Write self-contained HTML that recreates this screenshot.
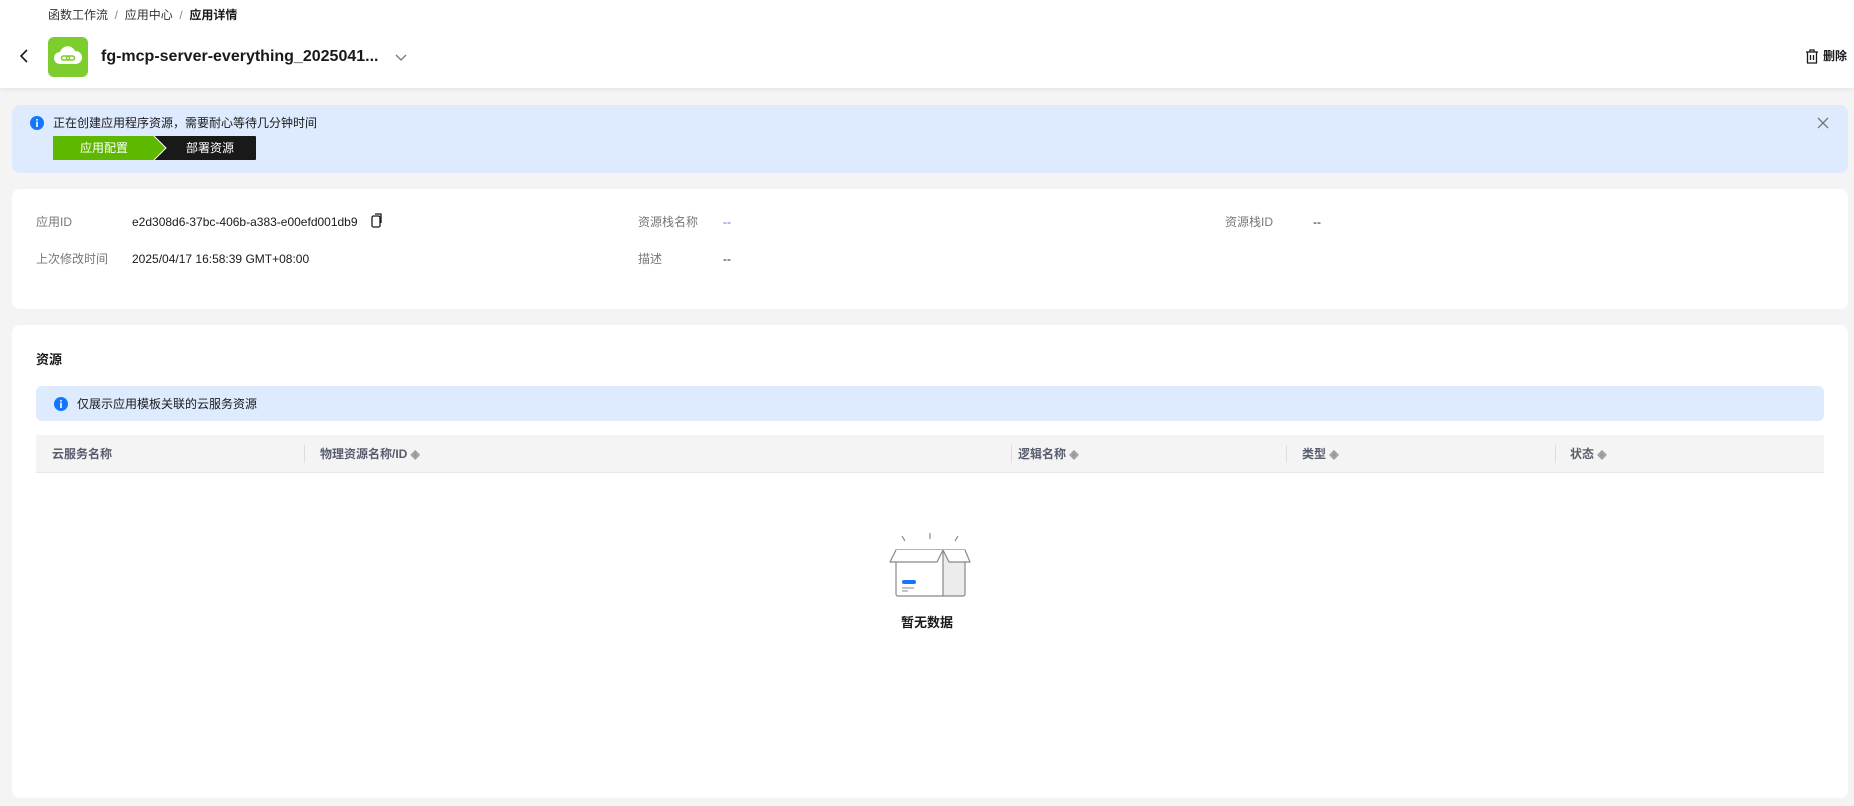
<!DOCTYPE html><html><head><meta charset="utf-8"><style>
*{box-sizing:border-box;margin:0;padding:0}
body{width:1854px;height:806px;background:#f4f4f4;font-family:"Liberation Sans","Noto Sans CJK SC",sans-serif;color:#191919;font-size:12px;line-height:16px;position:relative;overflow:hidden}
.a{position:absolute;white-space:nowrap}
.lbl{color:#777;font-size:12px}
.th{color:#575d6c;font-size:12px;font-weight:bold}
.dv{position:absolute;width:1px;height:18px;background:#ddd;top:445px}
</style></head><body>
<div class="a" style="left:0;top:0;width:1854px;height:88px;background:#fff;box-shadow:0 2px 4px rgba(0,0,0,.06)"></div>
<div class="a" style="left:48px;top:7px;font-size:12px;color:#333">函数工作流 <span style="color:#888">&nbsp;/&nbsp;</span> 应用中心 <span style="color:#888">&nbsp;/&nbsp;</span> <b style="color:#191919">应用详情</b></div>
<svg class="a" style="left:18px;top:48px" width="12" height="16" viewBox="0 0 12 16"><path d="M9 2L3 8l6 6" stroke="#191919" stroke-width="1.6" fill="none"/></svg>
<div class="a" style="left:48px;top:37px;width:40px;height:40px;border-radius:6px;background:#7ccd2d"></div>
<svg class="a" style="left:48px;top:37px" width="40" height="40" viewBox="0 0 40 40"><path d="M12 27a6 6 0 0 1 0-12 8 8 0 0 1 15 -1 6.5 6.5 0 0 1 1 13z" fill="#fff"/><rect x="13.5" y="19" width="8" height="4" rx="2" stroke="#7ccd2d" stroke-width="1.5" fill="none"/><rect x="18.5" y="19" width="8" height="4" rx="2" stroke="#7ccd2d" stroke-width="1.5" fill="none"/></svg>
<div class="a" style="left:101px;top:47px;font-size:16px;line-height:20px;font-weight:bold">fg-mcp-server-everything_2025041...</div>
<svg class="a" style="left:395px;top:54px" width="12" height="8" viewBox="0 0 12 8"><path d="M1 1l5 5 5-5" stroke="#777" stroke-width="1.3" fill="none"/></svg>
<svg class="a" style="left:1805px;top:49px" width="14" height="15" viewBox="0 0 14 15"><path d="M1 3h12M5 3V1h4v2M2.5 3v11h9V3M5.5 6v5M8.5 6v5" stroke="#191919" stroke-width="1.3" fill="none"/></svg>
<div class="a" style="left:1823px;top:48px;font-weight:bold">删除</div>

<div class="a" style="left:12px;top:105px;width:1836px;height:68px;background:#deebff;border-radius:8px"></div>
<svg class="a" style="left:30px;top:116px" width="14" height="14" viewBox="0 0 14 14"><circle cx="7" cy="7" r="7" fill="#1476ff"/><rect x="6.2" y="3" width="1.6" height="1.6" fill="#fff"/><rect x="6.2" y="5.6" width="1.6" height="5.4" fill="#fff"/></svg>
<div class="a" style="left:53px;top:115px;font-size:12px">正在创建应用程序资源，需要耐心等待几分钟时间</div>
<svg class="a" style="left:53px;top:136px" width="203" height="24" viewBox="0 0 203 24"><rect x="0" y="0" width="203" height="24" fill="#191919" rx="1"/><path d="M0 0h101l12 12-12 12H0z" fill="#5eb800"/><path d="M101 0l12 12-12 12" stroke="#fff" stroke-width="1" fill="none"/></svg>
<div class="a" style="left:53px;top:140px;width:102px;text-align:center;color:#fff;font-size:12px">应用配置</div>
<div class="a" style="left:165px;top:140px;width:90px;text-align:center;color:#fff;font-size:12px">部署资源</div>
<svg class="a" style="left:1817px;top:117px" width="12" height="12" viewBox="0 0 12 12"><path d="M1 1l10 10M11 1L1 11" stroke="#777" stroke-width="1.3"/></svg>

<div class="a" style="left:12px;top:189px;width:1836px;height:120px;background:#fff;border-radius:8px"></div>
<div class="a lbl" style="left:36px;top:214px">应用ID</div>
<div class="a" style="left:132px;top:214px">e2d308d6-37bc-406b-a383-e00efd001db9</div>
<svg class="a" style="left:371px;top:213px" width="14" height="15" viewBox="0 0 14 15"><rect x="1" y="3" width="8" height="11" rx="1.5" stroke="#191919" stroke-width="1.3" fill="none"/><path d="M4 1h6v9" stroke="#191919" stroke-width="1.3" fill="none"/></svg>
<div class="a lbl" style="left:638px;top:214px">资源栈名称</div>
<div class="a" style="left:723px;top:214px;color:#526ecc">--</div>
<div class="a lbl" style="left:1225px;top:214px">资源栈ID</div>
<div class="a" style="left:1313px;top:214px">--</div>
<div class="a lbl" style="left:36px;top:251px">上次修改时间</div>
<div class="a" style="left:132px;top:251px">2025/04/17 16:58:39 GMT+08:00</div>
<div class="a lbl" style="left:638px;top:251px">描述</div>
<div class="a" style="left:723px;top:251px">--</div>

<div class="a" style="left:12px;top:325px;width:1836px;height:473px;background:#fff;border-radius:8px"></div>
<div class="a" style="left:36px;top:352px;font-size:13px;font-weight:bold">资源</div>
<div class="a" style="left:36px;top:386px;width:1788px;height:35px;background:#deebff;border-radius:6px"></div>
<svg class="a" style="left:54px;top:397px" width="14" height="14" viewBox="0 0 14 14"><circle cx="7" cy="7" r="7" fill="#1476ff"/><rect x="6.2" y="3" width="1.6" height="1.6" fill="#fff"/><rect x="6.2" y="5.6" width="1.6" height="5.4" fill="#fff"/></svg>
<div class="a" style="left:77px;top:396px">仅展示应用模板关联的云服务资源</div>
<div class="a" style="left:36px;top:435px;width:1788px;height:38px;background:#f4f4f4;border-bottom:1px solid #e8e8e8"></div>
<div class="a th" style="left:52px;top:446px">云服务名称</div>
<div class="dv" style="left:304px"></div>
<div class="a th" style="left:320px;top:446px">物理资源名称/ID <span style="color:#999">◈</span></div>
<div class="dv" style="left:1011px"></div>
<div class="a th" style="left:1018px;top:446px">逻辑名称 <span style="color:#999">◈</span></div>
<div class="dv" style="left:1286px"></div>
<div class="a th" style="left:1302px;top:446px">类型 <span style="color:#999">◈</span></div>
<div class="dv" style="left:1555px"></div>
<div class="a th" style="left:1570px;top:446px">状态 <span style="color:#999">◈</span></div>

<svg class="a" style="left:888px;top:530px" width="84" height="72" viewBox="0 0 84 72"><path d="M14 6l3 5M42 3v6M70 6l-3 5" stroke="#888" stroke-width="1.2"/><path d="M55 20h22v44a2 2 0 0 1-2 2H55z" fill="#ececec"/><path d="M8 20h47v46H10a2 2 0 0 1-2-2zM55 20h22v44a2 2 0 0 1-2 2H55" stroke="#888" stroke-width="1.2" fill="none"/><path d="M8 20L2 32h47l6-12M55 20l6 12h21l-5-12" stroke="#888" stroke-width="1.2" fill="#fff" stroke-linejoin="round"/><rect x="14" y="50" width="14" height="4" rx="2" fill="#1476ff"/><path d="M14 58h12M14 61h6" stroke="#888" stroke-width="1"/></svg>
<div class="a" style="left:901px;top:615px;font-size:13px;font-weight:bold">暂无数据</div>
</body></html>
